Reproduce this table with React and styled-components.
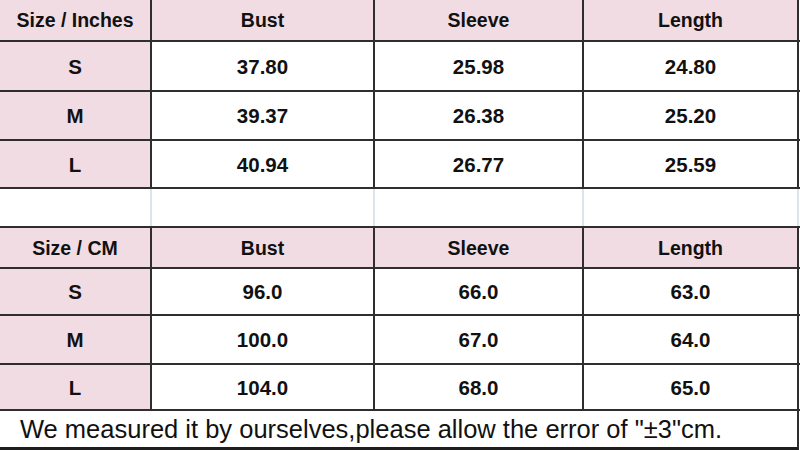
import React from 'react'
import styled, { createGlobalStyle } from 'styled-components'

const GlobalStyle = createGlobalStyle`
  html, body {
    margin: 0;
    padding: 0;
    background: #ffffff;
  }
  body {
    font-family: "Liberation Sans", Arial, sans-serif;
  }
`

const Sheet = styled.div`
  width: 800px;
  height: 450px;
  display: flex;
  flex-direction: column;
  overflow: hidden;
  background: #fff;
`

const Row = styled.div`
  display: grid;
  grid-template-columns: 152px 223px 209px 215px;
  height: ${p => p.$h}px;
  box-sizing: border-box;
  border-bottom: 2px solid #2e2e2e;
`

const Cell = styled.div`
  display: flex;
  align-items: center;
  justify-content: center;
  box-sizing: border-box;
  border-right: 2px solid ${p => (p.$light ? '#dde3ea' : '#2e2e2e')};
  background: ${p => (p.$pink ? '#f2dce3' : '#ffffff')};
  color: #111;
  font-size: ${p => (p.$head ? 19.5 : 20.5)}px;
  font-weight: bold;
  padding-top: 1px;
`

const Footer = styled.div`
  height: 39px;
  box-sizing: border-box;
  width: 799px;
  border-right: 2px solid #2e2e2e;
  border-bottom: 3px solid #1e1e1e;
  display: flex;
  align-items: center;
  padding-left: 20px;
  font-size: 25.5px;
  color: #111;
  white-space: nowrap;
`

const inches = {
  label: 'Size / Inches',
  heights: [42, 50, 49, 48],
  rows: [
    ['S', '37.80', '25.98', '24.80'],
    ['M', '39.37', '26.38', '25.20'],
    ['L', '40.94', '26.77', '25.59'],
  ],
}

const cm = {
  label: 'Size / CM',
  heights: [41, 47, 49, 46],
  rows: [
    ['S', '96.0', '66.0', '63.0'],
    ['M', '100.0', '67.0', '64.0'],
    ['L', '104.0', '68.0', '65.0'],
  ],
}

const SizeTable = ({ data }) => (
  <>
    <Row $h={data.heights[0]}>
      <Cell $pink $head>{data.label}</Cell>
      <Cell $pink $head>Bust</Cell>
      <Cell $pink $head>Sleeve</Cell>
      <Cell $pink $head>Length</Cell>
    </Row>
    {data.rows.map((r, i) => (
      <Row key={r[0]} $h={data.heights[i + 1]}>
        <Cell $pink>{r[0]}</Cell>
        <Cell>{r[1]}</Cell>
        <Cell>{r[2]}</Cell>
        <Cell>{r[3]}</Cell>
      </Row>
    ))}
  </>
)

export default function App() {
  return (
    <>
      <GlobalStyle />
      <Sheet>
        <SizeTable data={inches} />
        <Row $h={39}>
          <Cell $light />
          <Cell $light />
          <Cell $light />
          <Cell $light />
        </Row>
        <SizeTable data={cm} />
        <Footer>We measured it by ourselves,please allow the error of "±3"cm.</Footer>
      </Sheet>
    </>
  )
}
